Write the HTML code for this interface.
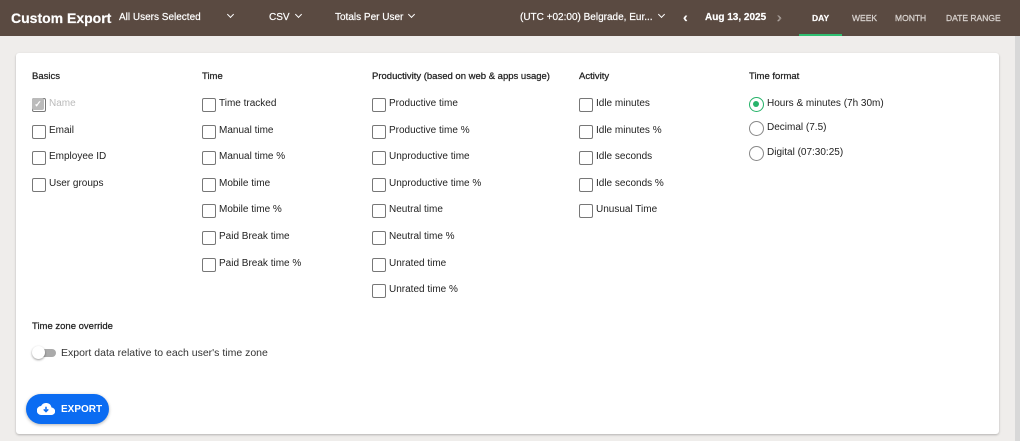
<!DOCTYPE html>
<html><head><style>
*{box-sizing:border-box;margin:0;padding:0}
body{width:1020px;height:441px;background:#efedeb;font-family:"Liberation Sans",sans-serif;position:relative;overflow:hidden;color:#222}
.hdr{position:absolute;left:0;top:0;width:1020px;height:36px;background:#5a4a41;color:#fff}
.hdr span{position:absolute;top:12px;font-size:10px;white-space:nowrap;-webkit-text-stroke:0.2px #fff}
.chev{display:inline-block;width:5px;height:5px;border-right:1.6px solid #fff;border-bottom:1.6px solid #fff;transform:rotate(45deg);margin-left:6px;position:relative;top:-3px}
.sb{position:absolute;left:1015px;top:36px;width:5px;height:405px;background:#d8d8d8}
.card{position:absolute;left:16px;top:53px;width:983px;height:381px;background:#fff;border-radius:3px;box-shadow:0 1px 2px rgba(0,0,0,.25)}
.h{position:absolute;font-size:9.5px;color:#222;-webkit-text-stroke:0.25px #222}
.c{position:absolute;font-size:10px;color:#222;white-space:nowrap;padding-left:17px;line-height:12px;margin-top:1px}
.c::before{content:"";position:absolute;left:0;top:0;width:12px;height:12px;border:1.2px solid #777;border-radius:2px}
.r{position:absolute;font-size:10px;color:#222;white-space:nowrap;padding-left:18px;line-height:13px;margin-top:1px}
.r::before{content:"";position:absolute;left:0;top:0;width:13px;height:13px;border:1.2px solid #888;border-radius:50%}
.r.on::before{border-color:#27b36a}
.r.on::after{content:"";position:absolute;left:3.5px;top:3.5px;width:6px;height:6px;background:#27b36a;border-radius:50%}
</style></head><body>
<div class="hdr">
<span style="left:11px;top:10px;font-size:14px;font-weight:bold">Custom Export</span>
<span style="left:119px">All Users Selected</span><span style="left:222px"><i class="chev"></i></span>
<span style="left:269px">CSV<i class="chev"></i></span>
<span style="left:335px">Totals Per User<i class="chev"></i></span>
<span style="left:520px">(UTC +02:00) Belgrade, Eur...<i class="chev"></i></span>
<span style="left:683px;font-size:14px;top:9px;font-weight:bold">‹</span>
<span style="left:705px;font-weight:bold">Aug 13, 2025</span>
<span style="left:777px;font-size:14px;top:9px;color:#8a7d75">›</span>
<span style="left:812px;font-size:8.5px;top:13px;font-weight:bold">DAY</span>
<span style="left:852px;font-size:8.5px;top:13px;color:#bfb5ae">WEEK</span>
<span style="left:895px;font-size:8.5px;top:13px;color:#bfb5ae">MONTH</span>
<span style="left:946px;font-size:8.5px;top:13px;color:#bfb5ae">DATE RANGE</span>
<div style="position:absolute;left:799px;top:34px;width:43px;height:2px;background:#2fbf71"></div>
</div>
<div class="sb"></div>
<div class="card">
<div class="h" style="left:16px;top:18px">Basics</div>
<div class="h" style="left:186px;top:18px">Time</div>
<div class="h" style="left:356px;top:18px">Productivity (based on web &amp; apps usage)</div>
<div class="h" style="left:563px;top:18px">Activity</div>
<div class="h" style="left:733px;top:18px">Time format</div>

<div class="c" style="left:16px;top:44px;color:#bbb"><b style="position:absolute;left:0;top:0;width:12px;height:12px;background:#bbb;border-radius:2px;color:#fff;font-size:9px;text-align:center;line-height:12px">✓</b>Name</div>
<div class="c" style="left:16px;top:71px">Email</div>
<div class="c" style="left:16px;top:97px">Employee ID</div>
<div class="c" style="left:16px;top:124px">User groups</div>

<div class="c" style="left:186px;top:44px">Time tracked</div>
<div class="c" style="left:186px;top:71px">Manual time</div>
<div class="c" style="left:186px;top:97px">Manual time %</div>
<div class="c" style="left:186px;top:124px">Mobile time</div>
<div class="c" style="left:186px;top:150px">Mobile time %</div>
<div class="c" style="left:186px;top:177px">Paid Break time</div>
<div class="c" style="left:186px;top:204px">Paid Break time %</div>

<div class="c" style="left:356px;top:44px">Productive time</div>
<div class="c" style="left:356px;top:71px">Productive time %</div>
<div class="c" style="left:356px;top:97px">Unproductive time</div>
<div class="c" style="left:356px;top:124px">Unproductive time %</div>
<div class="c" style="left:356px;top:150px">Neutral time</div>
<div class="c" style="left:356px;top:177px">Neutral time %</div>
<div class="c" style="left:356px;top:204px">Unrated time</div>
<div class="c" style="left:356px;top:230px">Unrated time %</div>

<div class="c" style="left:563px;top:44px">Idle minutes</div>
<div class="c" style="left:563px;top:71px">Idle minutes %</div>
<div class="c" style="left:563px;top:97px">Idle seconds</div>
<div class="c" style="left:563px;top:124px">Idle seconds %</div>
<div class="c" style="left:563px;top:150px">Unusual Time</div>

<div class="r on" style="left:733px;top:43px">Hours &amp; minutes (7h 30m)</div>
<div class="r" style="left:733px;top:67px">Decimal (7.5)</div>
<div class="r" style="left:733px;top:92px">Digital (07:30:25)</div>

<div class="h" style="left:16px;top:268px">Time zone override</div>
<div style="position:absolute;left:18px;top:296px;width:22px;height:8px;background:#aaa;border-radius:4px"></div>
<div style="position:absolute;left:16px;top:293px;width:13px;height:13px;background:#fff;border-radius:50%;box-shadow:0 1px 2px rgba(0,0,0,.4)"></div>
<div style="position:absolute;left:45px;top:294px;font-size:10.5px;color:#333">Export data relative to each user's time zone</div>

<div style="position:absolute;left:10px;top:341px;width:83px;height:30px;background:#0b6cf2;border-radius:15px;box-shadow:0 1px 3px rgba(0,0,0,.3);color:#fff;font-size:10px;font-weight:bold">
<svg style="position:absolute;left:11px;top:8px" width="18" height="14" viewBox="0 0 24 18"><path d="M19.4 7A7.5 7.5 0 0 0 5.4 5 6 6 0 0 0 6 17h13a5 5 0 0 0 .4-10z" fill="#fff"/><path d="M12 6v6M9 9.5l3 3 3-3" stroke="#0b6cf2" stroke-width="2" fill="none"/></svg>
<span style="position:absolute;left:35px;top:10px">EXPORT</span></div>
</div>
</body></html>
